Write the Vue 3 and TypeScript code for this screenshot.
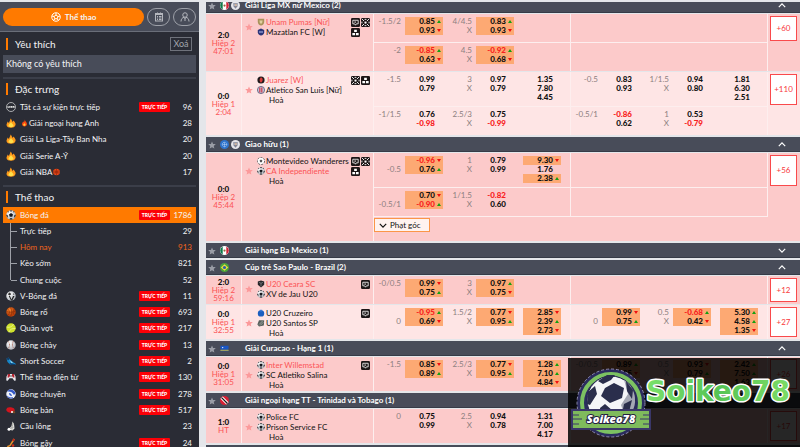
<script setup lang="ts">
type Trend = 'up' | 'down' | ''
interface Price { value: string; trend: Trend }
interface Market {
  handicap: string[]
  hcPrices: Price[]
  totals: string[]
  totalPrices: Price[]
  winPrices: Price[]
}
interface Team { name: string; icon: string; hot?: boolean }
interface Match {
  score: string
  period: string
  clock: string
  teams: Team[]
  draw: boolean
  tools: string[]
  lines: (Market | null)[][]
  more: string
  light?: boolean
  corner?: boolean
}
interface League { name: string; flags: string[]; open: boolean; matches: Match[] }

// "0.85+" is a rising price, "0.85_" a falling one
function prices(list: string): Price[] {
  return list.split(' ').filter(Boolean).map((p) => {
    const last = p.slice(-1)
    if (last === '+') return { value: p.slice(0, -1), trend: 'up' }
    if (last === '_') return { value: p.slice(0, -1), trend: 'down' }
    return { value: p, trend: '' }
  })
}

function market(handicap: string, hc: string, total: string, tp: string, win = ''): Market {
  return {
    handicap: handicap.split('|'),
    hcPrices: prices(hc),
    totals: [total, 'X'],
    totalPrices: prices(tp),
    winPrices: prices(win),
  }
}

const leagues: League[] = [
  {
    name: 'Giải Liga MX nữ Mexico (2)', flags: ['mx', 'crest'], open: true,
    matches: [
      {
        score: '2:0', period: 'Hiệp 2', clock: '47:01', draw: false, more: '+60',
        teams: [{ name: 'Unam Pumas [Nữ]', icon: 'shield-gold', hot: true }, { name: 'Mazatlan FC [W]', icon: 'shield-blue' }],
        tools: ['live', 'field', 'stats'],
        lines: [
          [market('-1.5/2', '0.85+ 0.93_', '4/4.5', '0.83+ 0.93_'), null],
          [market('-2', '-0.85+ 0.63_', '4.5', '-0.92+ 0.68_'), null],
        ],
      },
      {
        score: '0:0', period: 'Hiệp 1', clock: '2:04', draw: true, more: '+110', light: true,
        teams: [{ name: 'Juarez [W]', icon: 'shield-red', hot: true }, { name: 'Atletico San Luis [Nữ]', icon: 'shield-stripe' }],
        tools: ['field', 'stats'],
        lines: [
          [market('-1.5', '0.99 0.79', '3', '0.97 0.79', '1.35 7.80 4.45'), market('-0.5', '0.83 0.93', '1/1.5', '0.94 0.80', '1.81 6.30 2.51')],
          [market('-1/1.5', '0.76 -0.98', '2.5/3', '0.75 -0.99'), market('-0.5/1', '-0.86 0.62', '1', '0.53 -0.79')],
        ],
      },
    ],
  },
  {
    name: 'Giao hữu (1)', flags: ['un', 'crest'], open: true,
    matches: [
      {
        score: '0:0', period: 'Hiệp 2', clock: '45:44', draw: true, more: '+56', corner: true,
        teams: [{ name: 'Montevideo Wanderers', icon: 'ball-light' }, { name: 'CA Independiente', icon: 'soccer', hot: true }],
        tools: ['live', 'field', 'stats'],
        lines: [
          [market('|-0.5', '-0.96_ 0.76+', '1', '0.79 0.99', '9.30_ 1.76 2.38+'), null],
          [market('|-0.5/1', '0.70_ -0.90+', '1/1.5', '-0.82 0.60'), null],
        ],
      },
    ],
  },
  { name: 'Giải hạng Ba Mexico (1)', flags: ['mx'], open: false, matches: [] },
  {
    name: 'Cúp trẻ Sao Paulo - Brazil (2)', flags: ['br'], open: true,
    matches: [
      {
        score: '2:0', period: 'Hiệp 2', clock: '59:16', draw: false, more: '+12',
        teams: [{ name: 'U20 Ceara SC', icon: 'shield-black', hot: true }, { name: 'XV de Jau U20', icon: 'soccer' }],
        tools: ['live'],
        lines: [[market('-0/0.5', '0.99_ 0.75+', '3', '0.97+ 0.75_'), null]],
      },
      {
        score: '0:0', period: 'Hiệp 1', clock: '32:55', draw: true, more: '+27', light: true,
        teams: [{ name: 'U20 Cruzeiro', icon: 'disc-blue' }, { name: 'U20 Santos SP', icon: 'shield-grey' }],
        tools: ['live'],
        lines: [[market('|0', '-0.95+ 0.69_', '1.5/2', '0.77_ 0.95+', '2.85_ 2.39+ 2.73_'), market('|0', '0.99_ 0.75+', '0.5', '-0.68+ 0.42_', '5.30+ 4.58+ 1.35_')]],
      },
    ],
  },
  {
    name: 'Giải Curacao - Hạng 1 (1)', flags: ['cw'], open: true,
    matches: [
      {
        score: '0:0', period: 'Hiệp 1', clock: '31:05', draw: true, more: '+26',
        teams: [{ name: 'Inter Willemstad', icon: 'soccer', hot: true }, { name: 'SC Atletiko Salina', icon: 'soccer' }],
        tools: ['live'],
        lines: [[market('-1.5', '0.85_ 0.89+', '2.5/3', '0.77_ 0.95+', '1.28+ 7.10+ 4.84_'), market('-0/0.5', '0.89+ 0.85_', '0.5', '0.93_ 0.79+', '2.42+ 7.50+ 1.63_')]],
      },
    ],
  },
  {
    name: 'Giải ngoại hạng TT - Trinidad và Tobago (1)', flags: ['tt'], open: true,
    matches: [
      {
        score: '1:0', period: 'HT', clock: '', draw: true, more: '+17',
        teams: [{ name: 'Police FC', icon: 'soccer' }, { name: 'Prison Service FC', icon: 'soccer' }],
        tools: [],
        lines: [[market('0', '0.75 0.99', '2.5', '0.94 0.78', '1.31 7.00 4.17'), null]],
      },
    ],
  },
  { name: '', flags: [], open: true, matches: [] },
]

interface Entry { name: string; icon: string; count: number; live?: boolean; pre?: string; post?: string }
const featured: Entry[] = [
  { name: 'Tất cả sự kiện trực tiếp', icon: 'all', count: 96, live: true },
  { name: 'Giải ngoại hạng Anh', icon: 'fire', count: 28, pre: 'flame' },
  { name: 'Giải La Liga-Tây Ban Nha', icon: 'fire', count: 20 },
  { name: 'Giải Serie A-Ý', icon: 'fire', count: 20 },
  { name: 'Giải NBA', icon: 'fire', count: 17, post: 'basket' },
]
const today = [
  { name: 'Trực tiếp', count: 29 },
  { name: 'Hôm nay', count: 913, active: true },
  { name: 'Kèo sớm', count: 821 },
  { name: 'Chung cuộc', count: 52 },
]
const sports: Entry[] = [
  { name: 'V-Bóng đá', icon: 'vsoccer', count: 11, live: true },
  { name: 'Bóng rổ', icon: 'basket', count: 693, live: true },
  { name: 'Quần vợt', icon: 'tennis', count: 217, live: true },
  { name: 'Bóng chày', icon: 'baseball', count: 13, live: true },
  { name: 'Short Soccer', icon: 'shoe', count: 2, live: true },
  { name: 'Thể thao điện tử', icon: 'pad', count: 130, live: true },
  { name: 'Bóng chuyền', icon: 'volley', count: 278, live: true },
  { name: 'Bóng bàn', icon: 'paddle', count: 517, live: true },
  { name: 'Cầu lông', icon: 'shuttle', count: 23 },
  { name: 'Bóng gậy', icon: 'stick', count: 24, live: true },
]
</script>

<template>
  <svg class="defs" aria-hidden="true">
    <defs>
      <radialGradient id="gOrange" cx=".35" cy=".3"><stop offset="0" stop-color="#ff8a2c" /><stop offset="1" stop-color="#b8400a" /></radialGradient>
      <radialGradient id="gWhite" cx=".35" cy=".3" r=".8"><stop offset="0" stop-color="#fff" /><stop offset="1" stop-color="#a9adb5" /></radialGradient>
      <linearGradient id="gBrand" x1="0" y1="0" x2="1" y2="0"><stop offset="0" stop-color="#7be06a" /><stop offset=".5" stop-color="#56c456" /><stop offset="1" stop-color="#7ddc66" /></linearGradient>
    </defs>
    <symbol id="star" viewBox="0 0 20 20"><path d="M10 1l2.700 6.200 6.800.6-5.100 4.500 1.500 6.700L10 15.500l-5.900 3.500 1.500-6.700L.5 7.800l6.800-.6z" fill="currentColor" /></symbol>
    <symbol id="soccer" viewBox="0 0 20 20"><circle cx="10" cy="10" r="9.500" fill="url(#gWhite)" /><path d="M10 6l4 3-1.500 4.500h-5L6 9zM7 .8h6L10 3.500zM.6 9l3 2-.4 4.500C1.500 14 .5 11 .6 9zM19.400 9l-3 2 .4 4.500C18.500 14 19.500 11 19.400 9zM7 19l1-2.500h4l1 2.500zM2.500 4l2.500-2 .5 3zM17.500 4L15 2l-.5 3z" fill="#15171c" /></symbol>
    <symbol id="ball-light" viewBox="0 0 20 20"><circle cx="10" cy="10" r="9" fill="#fff" stroke="#444" stroke-width="2" stroke-dasharray="5 3" /><path d="M10 6.500l3.500 2.500-1.300 4H7.800L6.500 9z" fill="#555" /></symbol>
    <symbol id="vsoccer" viewBox="0 0 20 20"><circle cx="10" cy="10" r="9.500" fill="url(#gWhite)" /><path d="M6 3l3 1 1 3-3 2-3-2zM14 4l3 3-2 1z" fill="#333" /><path d="M8 10l3 7 3-7h3l-4.500 9H10L5.500 10z" fill="#222" /></symbol>
    <symbol id="basket" viewBox="0 0 20 20"><circle cx="10" cy="10" r="9.500" fill="url(#gOrange)" /><path d="M1 9c6 2 12 2 18-1M9 .5c3 6 3 13 0 19M3 3.500c5 4 5 9 1 13M17 4c-4 4-4 9 0 12" fill="none" stroke="#7a2604" stroke-width="1" /></symbol>
    <symbol id="nba" viewBox="0 0 20 20"><circle cx="10" cy="10" r="9.500" fill="#e8481a" /><path d="M1 10h18M10 1v18M4 3c4 4 4 10 0 14M16 3c-4 4-4 10 0 14" fill="none" stroke="#7e1d06" stroke-width="1.500" /></symbol>
    <symbol id="tennis" viewBox="0 0 20 20"><circle cx="10" cy="10" r="9.500" fill="#cfe12d" /><path d="M1 8c6 2 12-1 14-6M6 19c1-6 6-9 13-8" fill="none" stroke="#eef6b0" stroke-width="1.300" /></symbol>
    <symbol id="baseball" viewBox="0 0 20 20"><circle cx="10" cy="10" r="9.500" fill="url(#gWhite)" /><path d="M4 2.500c4 4 4 11 0 15M15 2c-3 5-3 11 1 15" fill="none" stroke="#a0503c" stroke-width="1.400" stroke-dasharray="2 1" /></symbol>
    <symbol id="shoe" viewBox="0 0 20 20"><path d="M1 5l4-2 3 4 6 5 5 3v3H9L3 12z" fill="#1687c9" /><path d="M1 5l4-2 2 3-3 3zM7 14l12 2.500V18H9z" fill="#123b66" /><path d="M7 8l4 6 3-1z" fill="#b6e2f5" /></symbol>
    <symbol id="pad" viewBox="0 0 20 20"><path d="M4 4h12l3 5 .5 8-3 .5-3.500-5H7l-3.500 5L.5 17 1 9z" fill="#e8e8ee" /><path d="M4 4h4v4l-2 3H3zM16 4h-4v4l2 3h3z" fill="#b32430" /><circle cx="10" cy="8" r="1.500" fill="#333" /></symbol>
    <symbol id="volley" viewBox="0 0 20 20"><circle cx="10" cy="10" r="9.500" fill="#eef2fb" /><path d="M2 5C8 4 13 6 16 12l3-4C17 3 11 0 6 1.500zM1 12c3 4 8 6 13 4l-1 3C8 20 3 18 1 12zM6 8c3 0 6 3 6 6-4 0-6-2-6-6z" fill="#3559c7" /></symbol>
    <symbol id="paddle" viewBox="0 0 20 20"><ellipse cx="9" cy="10" rx="8.500" ry="5.500" fill="#d3141d" transform="rotate(10 9 10)" /><path d="M14 11l5 3-2 3-5-2z" fill="#7d4b22" /><circle cx="12" cy="14" r="2" fill="#fff" /></symbol>
    <symbol id="shuttle" viewBox="0 0 20 20"><path d="M13 1l3 5 1 9-4 4-8-2 6-7z" fill="#e9e9e4" /><path d="M13 2l-1 16M15 6l-7 11M16 12l-9 4" stroke="#8d8d88" stroke-width="1" /><circle cx="6" cy="16.500" r="3" fill="#fff" /></symbol>
    <symbol id="stick" viewBox="0 0 20 20"><path d="M15 1l3 2L9 16l-6 3-1-3 5-2z" fill="#e9932a" /><path d="M15 1l3 2-3 4-3-2z" fill="#c3261d" /><circle cx="14" cy="15" r="2.500" fill="#d3301c" /></symbol>
    <symbol id="all" viewBox="0 0 20 20"><circle cx="10" cy="10" r="9" fill="none" stroke="#eee" stroke-width="1.300" /><path d="M3 8h14v4H3z" fill="#dcdcdc" /><path d="M4 11.500l1.500-3L7 11.500M9 8.500v3h2M13 8.500v3h2.500" stroke="#2a2c35" stroke-width="1" fill="none" /></symbol>
    <symbol id="fire" viewBox="0 0 20 20"><path d="M9 1c3 3 3 5 4 7l2-3c3 4 5 6 4 9-1 4-5 5.500-9 5.500S1 18 1 14c0-3 2-4 2-7l3 3C6 7 9 5 9 1z" fill="#ff9a1a" /><path d="M10 8c1 3 6 5 5 8-1 3-9 3-10 0-1-3 4-5 5-8z" fill="#ffe04a" /></symbol>
    <symbol id="flame" viewBox="0 0 20 20"><path d="M11 0c0 5 6 7 6 13 0 4-3 7-7 7s-7-3-7-7c0-4 3-5 3-8l2 3c2-2 3-5 3-8z" fill="#ff4a10" /><path d="M10 10c0 2 4 3 3 6-1 3-6 3-7 0-.5-3 4-3 4-6z" fill="#ffc93a" /></symbol>

    <symbol id="mx" viewBox="0 0 20 20"><circle cx="10" cy="10" r="10" fill="#fff" /><path d="M6 1a10 10 0 0 0 0 18z" fill="#0c7a4a" /><path d="M14 1a10 10 0 0 1 0 18z" fill="#d41f35" /><circle cx="10" cy="10" r="2.500" fill="#8d6b3a" /></symbol>
    <symbol id="br" viewBox="0 0 20 20"><circle cx="10" cy="10" r="10" fill="#4aa53c" /><path d="M10 3l8 7-8 7-8-7z" fill="#f3e03a" /><circle cx="10" cy="10" r="3.500" fill="#2b5cab" /></symbol>
    <symbol id="cw" viewBox="0 0 20 20"><path d="M1 4h18v5a9 9 0 0 1-1 4H2a9 9 0 0 1-1-4z" fill="#1a56c4" /><path d="M1 13h18v2H1z" fill="#f3de3a" /><path d="M1 15h18v1H1z" fill="#1a56c4" /><circle cx="6" cy="8" r="1.500" fill="#fff" /></symbol>
    <symbol id="tt" viewBox="0 0 20 20"><circle cx="10" cy="10" r="10" fill="#d81f33" /><path d="M1 6l5-5 13 13-5 5z" fill="#fff" /><path d="M2.500 4.500l2-2 13 13-2 2z" fill="#161616" /></symbol>
    <symbol id="un" viewBox="0 0 20 20"><circle cx="10" cy="10" r="10" fill="#2e74cc" /><circle cx="10" cy="10" r="5" fill="none" stroke="#cfe3fa" stroke-width="1.500" stroke-dasharray="2 1" /><path d="M10 5v10M5 10h10" stroke="#cfe3fa" /></symbol>
    <symbol id="crest" viewBox="0 0 20 20"><circle cx="10" cy="10" r="10" fill="#e6e6ea" /><path d="M5 5h10l1 5-6 7-6-7z" fill="#7f8496" /><path d="M8 7h5l-2 6z" fill="#c98f5c" /><path d="M3 9h14" stroke="#fff" stroke-width="1.500" /></symbol>

    <symbol id="shield-gold" viewBox="0 0 20 20"><path d="M2 2h16v8c0 5-4 8-8 9-4-1-8-4-8-9z" fill="#a9925a" /><path d="M6 6h8l-1 6-3 3-3-3z" fill="#e0cfa0" /></symbol>
    <symbol id="shield-blue" viewBox="0 0 20 20"><path d="M10 1l8 4v6c0 4-4 7-8 8-4-1-8-4-8-8V5z" fill="#2b3478" /><path d="M5 10h10" stroke="#9fa8e0" stroke-width="3" /></symbol>
    <symbol id="shield-red" viewBox="0 0 20 20"><circle cx="10" cy="10" r="9" fill="#1e1a1c" /><path d="M10 3c5 2 6 9 0 14-4-3-5-10 0-14z" fill="#d83a3a" /></symbol>
    <symbol id="shield-stripe" viewBox="0 0 20 20"><circle cx="10" cy="10" r="9" fill="#c3c6da" stroke="#5a5878" stroke-width="2" /><path d="M7 4v12M12 4v12" stroke="#d0384a" stroke-width="3" /></symbol>
    <symbol id="shield-black" viewBox="0 0 20 20"><path d="M2 4l8-3 8 3v8l-8 7-8-7z" fill="#26262a" /><path d="M5 6l5 2 5-2M10 8v8" stroke="#9a9aa0" stroke-width="1.500" fill="none" /></symbol>
    <symbol id="shield-grey" viewBox="0 0 20 20"><path d="M5 3h13l-1 13-12 3-4-5z" fill="#56605c" /><path d="M5 14L15 4M8 16l8-8" stroke="#c6ccc9" stroke-width="1.500" /></symbol>
    <symbol id="disc-blue" viewBox="0 0 20 20"><circle cx="10" cy="11" r="8" fill="#1b5fc0" /><path d="M7 2h6v4H7z" fill="#3c7bd6" /></symbol>

    <symbol id="live" viewBox="0 0 20 20"><rect width="20" height="20" rx="3" fill="#1c1516" /><path d="M4 5h12v8h-4l-2 3-2-3H4z" fill="none" stroke="#fff" stroke-width="1.800" /><path d="M8 7l4 2-4 2z" fill="#fff" /></symbol>
    <symbol id="field" viewBox="0 0 20 20"><rect width="20" height="20" rx="3" fill="#1c1516" /><path d="M2 2l5 5M18 2l-5 5M2 18l5-5M18 18l-5-5M8 3h4M8 17h4M2 8v4M18 8v4" fill="none" stroke="#fff" stroke-width="2" /><circle cx="10" cy="10" r="2.500" fill="#fff" /></symbol>
    <symbol id="stats" viewBox="0 0 20 20"><rect width="20" height="20" rx="3" fill="#1c1516" /><path d="M7 4h6v5H7zM3 11h6v5H3zM11 11h6v5h-6z" fill="#fff" /></symbol>
  </svg>

  <div class="page">
    <aside class="sidebar">
      <div class="tabs">
        <button class="tab-main" type="button">
          <svg viewBox="0 0 20 20"><circle cx="10" cy="10" r="8.500" /><path d="M10 6l4 3-1.500 4.500h-5L6 9zM10 6V2M14 9l4-1M12.500 13.500l2 3.500M7.500 13.500l-2 3.500M6 9L2 8" /></svg>
          Thể thao
        </button>
        <button class="tab-round" type="button" aria-label="Phiếu cược">
          <svg viewBox="0 0 20 20"><rect x="3" y="3" width="14" height="15" /><path d="M3 5h14M6 9h2M10 9h5M6 12h2M10 12h5M6 15h2M10 15h5M7 1v3M13 1v3" /></svg>
        </button>
        <button class="tab-round" type="button" aria-label="Tài khoản">
          <svg viewBox="0 0 20 20"><circle cx="10" cy="6" r="4.500" /><path d="M2 19c0-5 3-8 6-8.500l2 3 2-3c3 .5 6 3.500 6 8.500M10 13v5" /></svg>
        </button>
      </div>

      <section class="group">
        <div class="group-head">
          <h2>Yêu thích</h2>
          <button class="clear" type="button">Xoá</button>
        </div>
        <p class="empty">Không có yêu thích</p>
      </section>

      <section class="group ruled">
        <div class="group-head"><h2>Đặc trưng</h2></div>
        <ul class="entries">
          <li v-for="e in featured" :key="e.name">
            <a class="entry" href="#">
              <svg class="sport"><use :href="'#' + e.icon" /></svg>
              <svg v-if="e.pre" class="emoji"><use :href="'#' + e.pre" /></svg>
              <span class="label">{{ e.name }}<svg v-if="e.post" class="emoji"><use href="#nba" /></svg></span>
              <span v-if="e.live" class="badge">TRỰC TIẾP</span>
              <span class="count">{{ e.count }}</span>
            </a>
          </li>
        </ul>
      </section>

      <section class="group ruled">
        <div class="group-head"><h2>Thể thao</h2></div>
        <a class="entry current" href="#">
          <svg class="sport"><use href="#soccer" /></svg>
          <span class="label">Bóng đá</span>
          <span class="badge">TRỰC TIẾP</span>
          <span class="count">1786</span>
        </a>
        <ul class="entries tree">
          <li v-for="t in today" :key="t.name">
            <a class="entry" :class="{ active: t.active }" href="#">
              <span class="label">{{ t.name }}</span>
              <span class="count">{{ t.count }}</span>
            </a>
          </li>
        </ul>
        <ul class="entries">
          <li v-for="e in sports" :key="e.name">
            <a class="entry" href="#">
              <svg class="sport"><use :href="'#' + e.icon" /></svg>
              <span class="label">{{ e.name }}</span>
              <span v-if="e.live" class="badge">TRỰC TIẾP</span>
              <span class="count">{{ e.count }}</span>
            </a>
          </li>
        </ul>
      </section>
    </aside>

    <main class="board">
      <div class="leagues">
        <section v-for="lg in leagues" :key="lg.name" class="league">
          <header class="league-head">
            <button class="fav" type="button" aria-label="Yêu thích giải"><svg><use href="#star" /></svg></button>
            <span class="flags"><svg v-for="f in lg.flags" :key="f"><use :href="'#' + f" /></svg></span>
            <h3>{{ lg.name }}</h3>
            <button class="fold" type="button" aria-label="Thu gọn">
              <svg viewBox="0 0 20 12"><path :d="lg.open ? 'M2 10l8-8 8 8' : 'M2 2l8 8 8-8'" /></svg>
            </button>
          </header>

          <article v-for="m in lg.matches" :key="m.more" class="match" :class="{ light: m.light }">
            <div class="clock">
              <b>{{ m.score }}</b>
              <span>{{ m.period }}</span>
              <span v-if="m.clock">{{ m.clock }}</span>
            </div>
            <div class="teams">
              <div class="pair">
                <button class="fav" type="button" aria-label="Yêu thích trận"><svg><use href="#star" /></svg></button>
                <ul>
                  <li v-for="t in m.teams" :key="t.name" :class="{ hot: t.hot }">
                    <svg><use :href="'#' + t.icon" /></svg>{{ t.name }}
                  </li>
                  <li v-if="m.draw" class="draw">Hoà</li>
                </ul>
              </div>
              <div class="tools"><svg v-for="t in m.tools" :key="t"><use :href="'#' + t" /></svg></div>
            </div>
            <div class="lines">
              <div v-for="(line, i) in m.lines" :key="i" class="line" :class="{ tall: line[0]?.winPrices.length }">
                <div v-for="(mk, j) in line" :key="j" class="market" :class="{ closed: m.corner }">
                  <template v-if="mk">
                    <div class="hint"><span v-for="(h, k) in mk.handicap" :key="k">{{ h }}</span></div>
                    <div class="prices">
                      <button v-for="(p, k) in mk.hcPrices" :key="k" type="button" :class="[p.trend, { minus: p.value[0] === '-' }]">{{ p.value }}</button>
                    </div>
                    <div class="hint"><span v-for="(h, k) in mk.totals" :key="k">{{ h }}</span></div>
                    <div class="prices">
                      <button v-for="(p, k) in mk.totalPrices" :key="k" type="button" :class="[p.trend, { minus: p.value[0] === '-' }]">{{ p.value }}</button>
                    </div>
                    <div class="prices win">
                      <button v-for="(p, k) in mk.winPrices" :key="k" type="button" :class="p.trend">{{ p.value }}</button>
                    </div>
                  </template>
                </div>
                <div class="extra"><button v-if="i === 0" type="button">{{ m.more }}</button></div>
              </div>
              <div v-if="m.corner" class="corner">
                <button type="button"><svg viewBox="0 0 20 12"><path d="M2 2l8 8 8-8" /></svg>Phạt góc</button>
              </div>
            </div>
          </article>
        </section>
      </div>
    </main>

    <div class="brand">
      <svg viewBox="0 0 232 89" role="img" aria-label="Soikeo78">
        <circle cx="43" cy="45" r="34" fill="#2b2c5e" stroke="#8e8bb0" stroke-width="1" stroke-dasharray="3 2" />
        <circle cx="43" cy="45" r="29" fill="#2b2c5e" stroke="#7cc262" stroke-width="4" />
        <circle cx="43" cy="42" r="24" fill="#f4f5f8" stroke="#23254c" stroke-width="1" />
        <path d="M56 22a24 24 0 0 1 9 30l-9 4-3-9 7-11z" fill="#a4a7b4" />
        <path d="M37 30l9-5 10 5-2 10-12 5-9-7zM30 23l9-6h8l-4 5-8 4zM20 34l7-6 2 8-7 11-3-1zM58 23l7 9-1 9-5-8zM32 50l5-4 8 7v9H33zM56 46l8-4-3 12-8 7z" fill="#2a2e4c" />
        <path d="M3 51h80v21H3z" fill="#3a3768" />
        <path d="M5 53h76v17H5z" fill="#7fbb5c" />
        <path d="M5 57h6M5 61h9M5 66h6M81 57h-6M81 61h-9M81 66h-6" stroke="#3a3768" stroke-width="1" />
        <text class="ribbon" x="43" y="65" text-anchor="middle">Soikeo78</text>
        <text class="wordmark" x="78" y="43">Soikeo78</text>
      </svg>
    </div>
  </div>
</template>

<style>
body {
  background: #e4e6ea;
}
</style>

<style scoped>
.defs {
  position: absolute;
  width: 0;
  height: 0;
}
.page {
  display: grid;
  grid-template-columns: 199px minmax(0, 1fr);
  gap: 7px;
  height: 100vh;
  box-sizing: border-box;
  padding-top: 2px;
  overflow: hidden;
  font: 8px/9px Lato, "Noto Sans", sans-serif;
  color: #111;
}
button {
  font: inherit;
  color: inherit;
  background: none;
  border: 0;
  padding: 0;
  cursor: pointer;
}
ul, p, h2, h3 {
  margin: 0;
  padding: 0;
  list-style: none;
  font-size: inherit;
  font-weight: 400;
}
a {
  color: inherit;
  text-decoration: none;
}

/* sidebar */
.sidebar {
  overflow: hidden;
  background: #2a2c35;
  color: #f4f4f6;
}
.tabs {
  display: flex;
  gap: 3px;
  padding: 6px 3px 5px;
  background: #484c59;
  border-bottom: 1px solid #6a6e79;
}
.tab-main,
.tab-round {
  display: flex;
  align-items: center;
  justify-content: center;
  gap: 4px;
  height: 18px;
  border-radius: 9px;
}
.tab-main {
  flex: 1;
  background: #ff7a00;
  font-weight: 700;
}
.tab-round {
  width: 23px;
  border: 1px solid #9da0a8;
}
.tabs svg {
  width: 10px;
  height: 10px;
  fill: none;
  stroke: #fff;
  stroke-width: 2;
}
.tab-round svg {
  stroke: #b4b6bd;
}
.group {
  margin: 0 3px;
}
.ruled {
  border-top: 2px solid #3b3e49;
}
.group-head {
  display: flex;
  align-items: center;
  justify-content: space-between;
  height: 20px;
  padding: 0 4px 0 3px;
}
.group-head h2 {
  border-left: 2px solid #ff7a00;
  padding-left: 7px;
  font-size: 10px;
  line-height: 12px;
}
.group:nth-of-type(1) .group-head {
  height: 23px;
}
.clear {
  width: 22px;
  height: 14px;
  border: 1px solid #6f727b;
  color: #a2a5ad;
  font-size: 9px;
  line-height: 12px;
}
.empty {
  margin-bottom: 4px;
  padding: 0 3px;
  background: #484c59;
  font-size: 9px;
  line-height: 18px;
}
.entries li:nth-child(3n) {
  margin-bottom: 1px;
}
.ruled + .ruled {
  margin-top: 5px;
}
.entry {
  display: flex;
  align-items: center;
  height: 16px;
  padding: 0 4px 0 3px;
}
.sport {
  width: 10px;
  height: 10px;
  margin-right: 4px;
}
.emoji {
  width: 7px;
  height: 8px;
  margin: 0 1px;
  vertical-align: -1px;
}
.label {
  flex: 1;
  white-space: nowrap;
}
.badge {
  width: 31px;
  border-radius: 1px;
  background: #fb0007;
  color: #fff;
  font-size: 5px;
  font-weight: 900;
  line-height: 10px;
  text-align: center;
  white-space: nowrap;
}
.count {
  width: 22px;
  text-align: right;
}
.current {
  background: #ff7a00;
}
.tree {
  position: relative;
}
.tree::before {
  content: "";
  position: absolute;
  top: 0;
  bottom: 8px;
  left: 7px;
  border-left: 1px solid #9ea1a8;
}
.tree .entry::before {
  content: "";
  width: 6px;
  margin: 0 3px 0 5px;
  border-top: 1px solid #9ea1a8;
}
.active {
  color: #f2651c;
}

/* board */
.board {
  overflow: hidden;
}
.leagues {
  display: grid;
  gap: 2px;
  margin-top: -4px;
}
.league {
  display: grid;
  gap: 1px;
}
.league-head {
  display: grid;
  grid-template-columns: 12px 27px minmax(0, 1fr) 36px;
  align-items: center;
  height: 15px;
  background: #484c59;
  box-shadow: inset 0 -1px #363b47;
  color: #fff;
}
.league-head h3 {
  font-weight: 700;
}
.fav {
  display: flex;
  justify-content: center;
}
.fav svg {
  width: 8px;
  height: 8px;
}
.league-head .fav {
  color: #9a9da6;
}
.flags {
  display: flex;
  gap: 2px;
  padding-left: 2px;
}
.flags svg {
  width: 9px;
  height: 9px;
}
.fold {
  display: flex;
  justify-content: center;
}
.fold svg,
.corner svg {
  width: 8px;
  height: 5px;
  fill: none;
  stroke: currentColor;
  stroke-width: 3;
}
.match {
  --tone: #fccaca;
  display: grid;
  grid-template-columns: 36px minmax(0, 132fr) minmax(0, 426fr);
  background: var(--tone);
}
.light {
  --tone: #fee5e5;
}
.clock {
  display: flex;
  flex-direction: column;
  justify-content: center;
  border-right: 1px solid #fdeeee;
  color: #fb5355;
  line-height: 8px;
  text-align: center;
}
.clock b {
  color: #111;
  font-weight: 900;
}
.teams {
  display: flex;
  align-items: flex-start;
  justify-content: space-between;
  padding: 3px 3px 0 2px;
  border-right: 1px solid #fdeeee;
}
.pair {
  display: flex;
  align-items: center;
  line-height: 10px;
  white-space: nowrap;
}
.pair .fav {
  width: 10px;
  margin-right: 3px;
  color: #fb9a9b;
}
.pair li {
  display: flex;
  align-items: center;
  gap: 1px;
}
.pair li svg {
  width: 8px;
  height: 8px;
}
.hot {
  color: #fb5355;
}
.pair .draw {
  padding-left: 12px;
}
.tools {
  display: flex;
  flex-wrap: wrap;
  flex-shrink: 0;
  gap: 1px;
  max-width: 19px;
  padding-top: 1px;
}
.tools svg {
  width: 9px;
  height: 9px;
}
.line {
  display: grid;
  grid-template-columns: minmax(0, 1fr) minmax(0, 1fr) 32px;
  height: 28px;
}
.tall {
  height: 34px;
}
.market {
  display: grid;
  grid-template-columns: 27fr 38fr 25fr 38fr 43fr;
  gap: 4px;
  padding: 3px 9px 0 0;
  border-right: 1px solid #fdeeee;
}
.line:not(:last-child) .market {
  border-bottom: 1px solid #fdeeee;
}
.line:not(:last-child) {
  height: 29px;
}
.tall:not(:last-child) {
  height: 35px;
}
.hint {
  color: #8c7f80;
  text-align: right;
}
.hint span {
  display: block;
  min-height: 9px;
}
.prices button {
  display: block;
  width: 100%;
  padding-right: 8px;
  font-weight: 900;
  line-height: 9px;
  text-align: right;
}
.win {
  padding-left: 5px;
}
.up,
.down {
  position: relative;
  background: #fda973;
}
.up::after,
.down::after {
  content: "";
  position: absolute;
  right: 2px;
  bottom: 3px;
  border: 2px solid transparent;
  border-top-width: 0;
  border-bottom: 3px solid #12a012;
}
.down::after {
  border-top: 3px solid #f01010;
  border-bottom-width: 0;
}
.minus {
  color: #f82020;
}
.extra {
  display: flex;
  padding: 2px 3px 2px 2px;
}
.extra button {
  flex: 1;
  border: 1px solid #f94a4c;
  background: #fff;
  color: #f8393c;
  text-align: center;
}
.corner {
  height: 23px;
  padding-top: 1px;
}
.corner button {
  display: flex;
  align-items: center;
  gap: 3px;
  height: 14px;
  padding: 0 8px 0 4px;
  border: 1px solid #fb9648;
  background: #fff3f0;
}

/* brand banner over the lower right corner */
.brand {
  position: absolute;
  right: 0;
  bottom: 0;
  width: 232px;
  height: 89px;
  background: rgba(0, 0, 0, 0.85);
}
.brand svg {
  display: block;
  width: 100%;
}
.ribbon {
  font: italic 900 11px "Noto Sans", sans-serif;
  fill: #fff;
  stroke: #23203f;
  stroke-width: 2px;
  paint-order: stroke;
}
.wordmark {
  font: 700 28px "DejaVu Sans", sans-serif;
  fill: url(#gBrand);
  stroke: #fff;
  stroke-width: 3px;
  stroke-linejoin: round;
  paint-order: stroke;
}
</style>
